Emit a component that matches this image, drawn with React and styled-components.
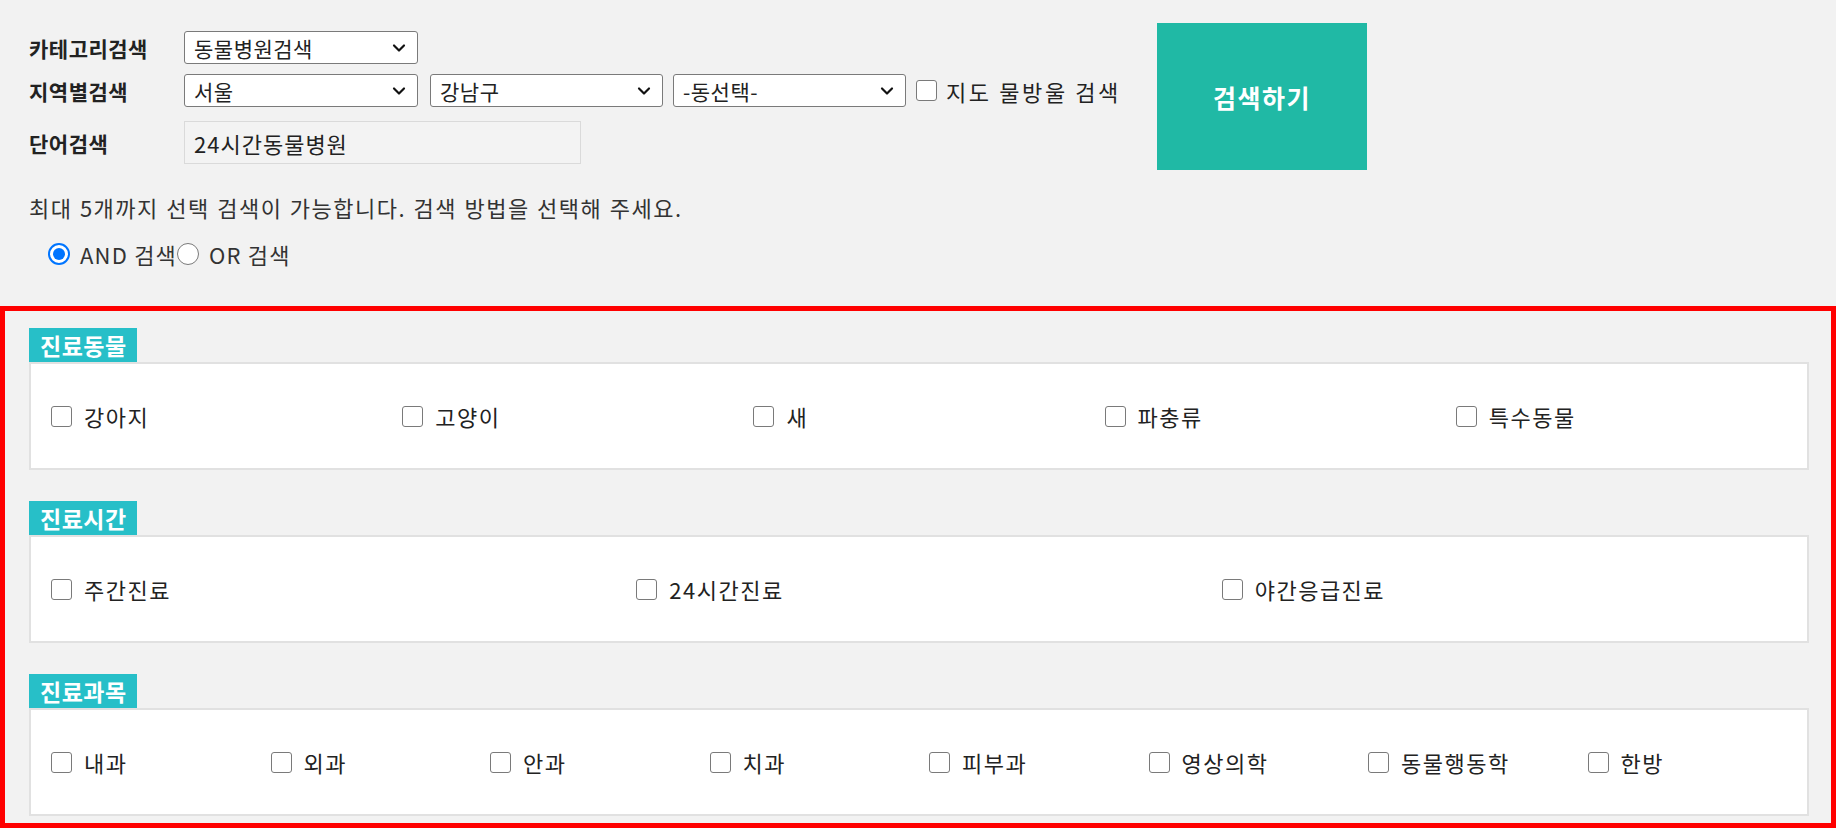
import React from "react";
import styled, { createGlobalStyle } from "styled-components";
import { ChevronDown } from "lucide-react";

const GlobalStyle = createGlobalStyle`
  html, body {
    margin: 0;
    padding: 0;
    background: #ffffff;
  }
  body {
    font-family: "Noto Sans CJK KR", "Noto Sans", sans-serif;
    color: #222222;
  }
  * {
    box-sizing: border-box;
  }
`;

const Page = styled.div`
  display: flex;
  flex-direction: column;
  height: 828px;
  background: #f2f2f2;
`;

const TopArea = styled.div`
  margin-left: 3px;
  padding: 23px 0 0 26px;
  background: #f2f2f2;
`;

const SearchRow = styled.div`
  display: flex;
  align-items: flex-start;
`;

const Form = styled.div`
  display: flex;
  flex-direction: column;
  gap: 10px;
  width: 1128px;
  margin-top: 8px;
`;

const FieldRow = styled.div`
  display: flex;
  align-items: center;
  margin-top: ${(p) => p.$offset || 0}px;
`;

const Label = styled.div`
  width: 155px;
  font-size: 21px;
  font-weight: 700;
  letter-spacing: 0.5px;
  color: #222;
`;

const SelectBox = styled.div`
  display: flex;
  align-items: center;
  justify-content: space-between;
  width: ${(p) => p.$width}px;
  height: 33px;
  margin-right: ${(p) => p.$gap || 0}px;
  padding: 0 8px 0 9px;
  background: #ffffff;
  border: 1px solid #7a7a7a;
  border-radius: 3px;
  font-size: 21px;
  letter-spacing: 0.5px;
  color: #222;
`;

const TextBox = styled.div`
  display: flex;
  align-items: center;
  width: 397px;
  height: 43px;
  padding: 0 9px;
  background: #f3f3f3;
  border: 1px solid #dadada;
  font-size: 22px;
  letter-spacing: 1px;
  color: #222;
`;

const Check = styled.span`
  display: inline-block;
  flex: none;
  width: 21px;
  height: 21px;
  background: #ffffff;
  border: 1.5px solid #7a7a7a;
  border-radius: 3px;
`;

const CheckLabel = styled.label`
  display: flex;
  align-items: center;
  gap: ${(p) => p.$gap || 12}px;
  font-size: 22px;
  letter-spacing: ${(p) => p.$spacing || 1.5}px;
  color: #222;
  white-space: nowrap;
`;

const SearchButton = styled.button`
  width: 210px;
  height: 147px;
  margin: 0;
  border: none;
  background: #20b9a5;
  color: #ffffff;
  font-family: inherit;
  font-size: 25px;
  font-weight: 700;
  letter-spacing: 1.5px;
`;

const Notice = styled.p`
  margin: 23px 0 0;
  font-size: 22px;
  line-height: 28px;
  letter-spacing: 1.5px;
  word-spacing: 1px;
  color: #333;
`;

const RadioRow = styled.div`
  display: flex;
  align-items: center;
  height: 28px;
  margin-top: 19px;
  padding-left: 19px;
  font-size: 22px;
  letter-spacing: 1.2px;
  color: #333;
`;

const Radio = styled.span`
  display: inline-flex;
  align-items: center;
  justify-content: center;
  flex: none;
  width: 22px;
  height: 22px;
  margin-right: 10px;
  border-radius: 50%;
  background: #ffffff;
  border: ${(p) => (p.$checked ? "2px solid #0075ff" : "1.5px solid #7a7a7a")};

  &::after {
    content: "";
    display: ${(p) => (p.$checked ? "block" : "none")};
    width: 12px;
    height: 12px;
    border-radius: 50%;
    background: #0075ff;
  }
`;

const FilterBox = styled.div`
  flex: 1;
  display: flex;
  flex-direction: column;
  gap: 31px;
  margin-top: 38px;
  padding: 17px 22px 0 24px;
  border: 5px solid #ff0000;
  background: #f2f2f2;
`;

const Section = styled.section`
  display: flex;
  flex-direction: column;
  align-items: flex-start;
`;

const Tag = styled.h3`
  margin: 0;
  height: 34px;
  padding: 0 10px 0 11px;
  background: #27bfc8;
  color: #ffffff;
  font-size: 23px;
  font-weight: 700;
  line-height: 34px;
  letter-spacing: 0.5px;
`;

const Panel = styled.div`
  display: grid;
  grid-template-columns: repeat(${(p) => p.$cols}, 1fr);
  align-items: center;
  align-self: stretch;
  height: 108px;
  padding-left: 20px;
  background: #ffffff;
  border: 2px solid #e1e1e1;
`;

const sections = [
  { title: "진료동물", items: ["강아지", "고양이", "새", "파충류", "특수동물"] },
  { title: "진료시간", items: ["주간진료", "24시간진료", "야간응급진료"] },
  {
    title: "진료과목",
    items: ["내과", "외과", "안과", "치과", "피부과", "영상의학", "동물행동학", "한방"],
  },
];

const Select = ({ width, gap, children }) => (
  <SelectBox $width={width} $gap={gap}>
    <span>{children}</span>
    <ChevronDown size={20} strokeWidth={2.6} color="#111" />
  </SelectBox>
);

export default function App() {
  return (
    <>
      <GlobalStyle />
      <Page>
        <TopArea>
          <SearchRow>
            <Form>
              <FieldRow>
                <Label>카테고리검색</Label>
                <Select width={234}>동물병원검색</Select>
              </FieldRow>
              <FieldRow>
                <Label>지역별검색</Label>
                <Select width={234} gap={12}>서울</Select>
                <Select width={233} gap={10}>강남구</Select>
                <Select width={233} gap={10}>-동선택-</Select>
                <CheckLabel $gap={9} $spacing={2.6}>
                  <Check />
                  지도 물방울 검색
                </CheckLabel>
              </FieldRow>
              <FieldRow $offset={4}>
                <Label>단어검색</Label>
                <TextBox>24시간동물병원</TextBox>
              </FieldRow>
            </Form>
            <SearchButton>검색하기</SearchButton>
          </SearchRow>
          <Notice>최대 5개까지 선택 검색이 가능합니다. 검색 방법을 선택해 주세요.</Notice>
          <RadioRow>
            <Radio $checked />
            AND 검색
            <Radio />
            OR 검색
          </RadioRow>
        </TopArea>
        <FilterBox>
          {sections.map((s) => (
            <Section key={s.title}>
              <Tag>{s.title}</Tag>
              <Panel $cols={s.items.length}>
                {s.items.map((item) => (
                  <CheckLabel key={item}>
                    <Check />
                    {item}
                  </CheckLabel>
                ))}
              </Panel>
            </Section>
          ))}
        </FilterBox>
      </Page>
    </>
  );
}
